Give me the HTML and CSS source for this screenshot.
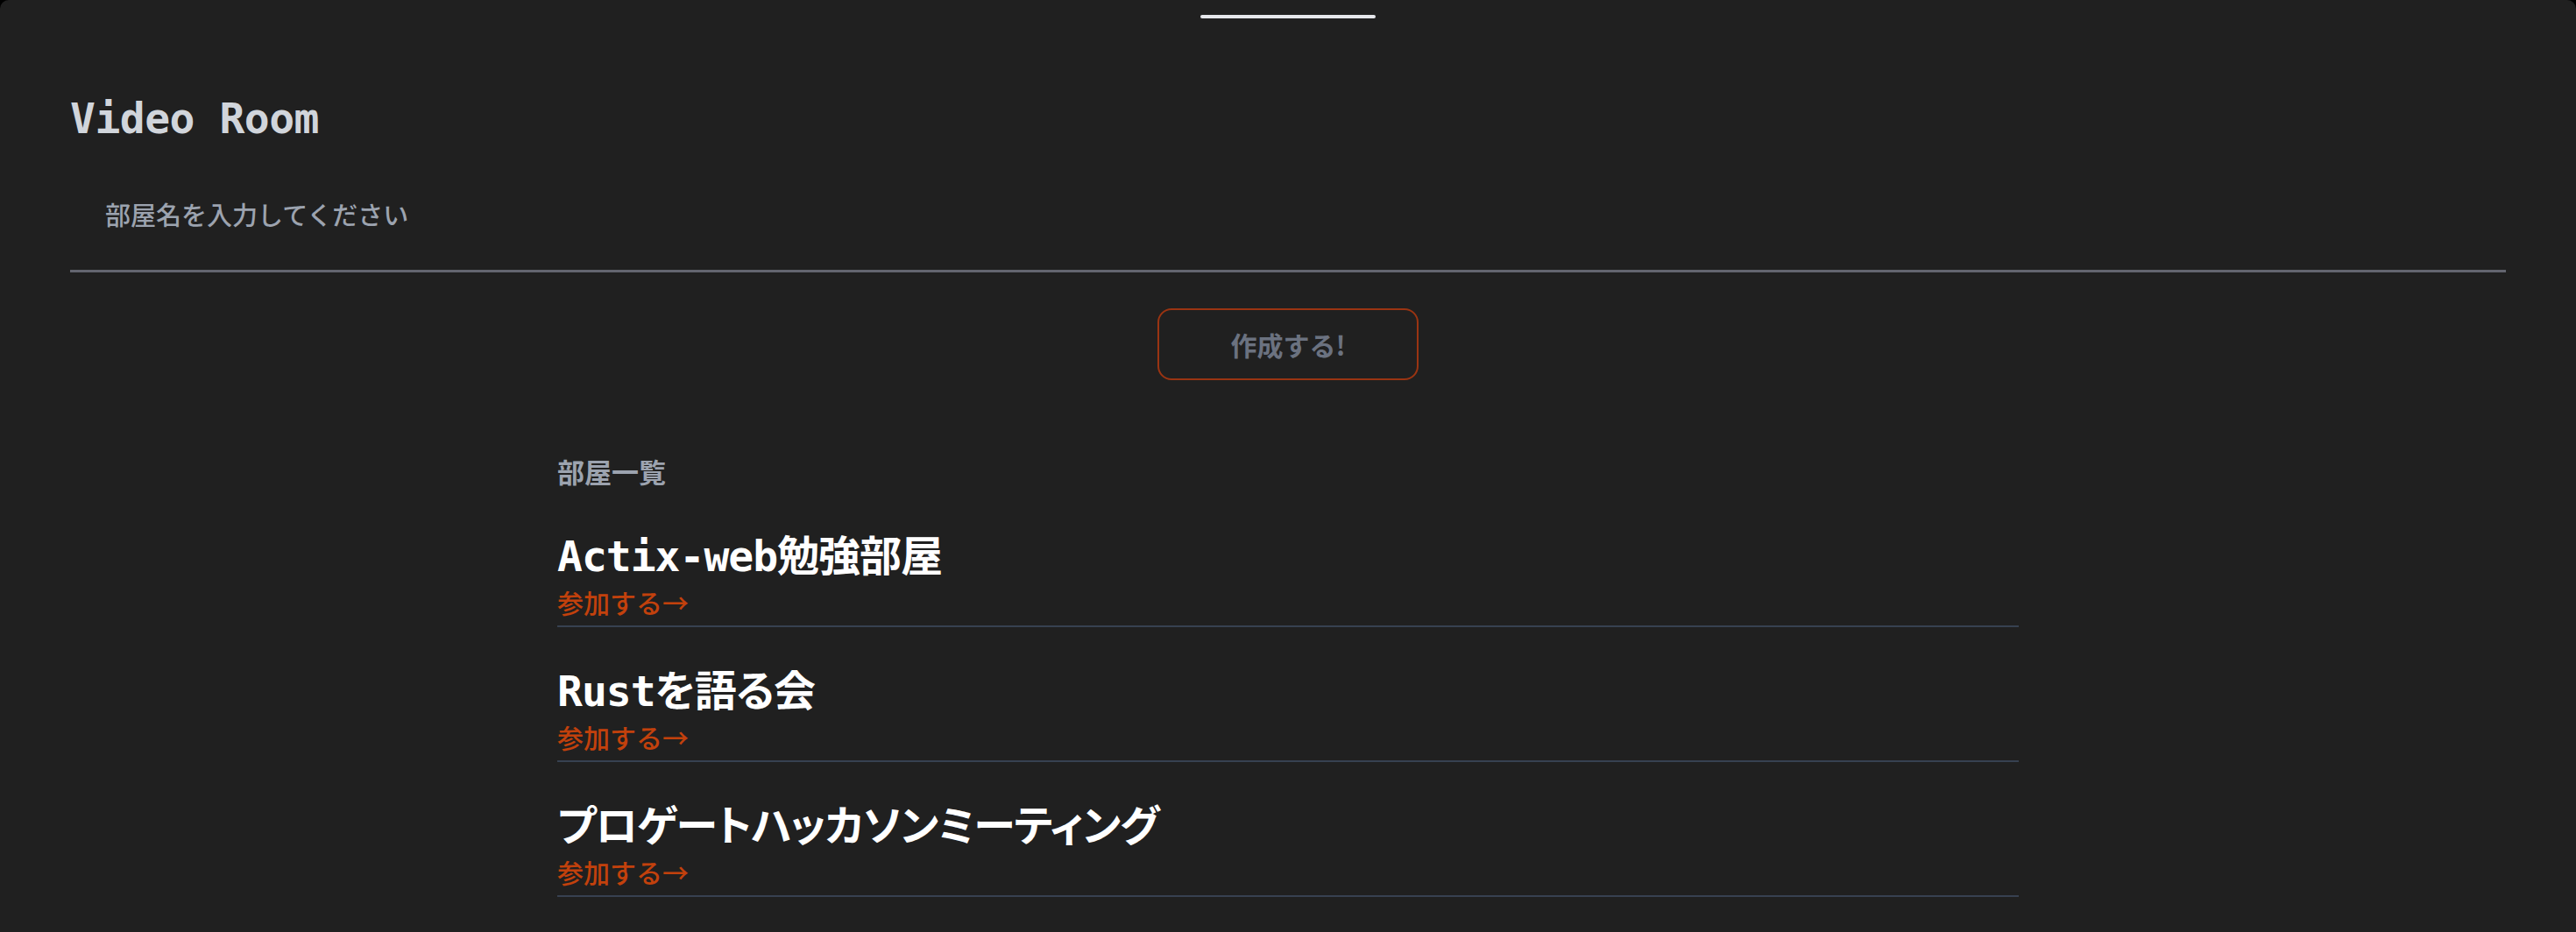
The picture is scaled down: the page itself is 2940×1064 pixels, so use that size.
FILE: index.html
```html
<!DOCTYPE html>
<html lang="ja">

<head>
    <meta charset="UTF-8">
    <meta name="viewport" content="width=device-width, initial-scale=1.0">
    <title>Video Room</title>
    <link rel="stylesheet" href="styles.css">
</head>

<body>
    <div class="app">
        <div class="handle"></div>
        <main class="container">
            <h1 class="title">Video Room</h1>
            <form class="create-form">
                <input class="room-input" type="text" placeholder="部屋名を入力してください">
                <button class="create-button" type="button">作成する!</button>
            </form>
            <section class="room-list">
                <h2 class="room-list-heading">部屋一覧</h2>
                <div class="room">
                    <div class="room-name">Actix-web勉強部屋</div>
                    <a class="room-link" href="#">参加する→</a>
                </div>
                <div class="room">
                    <div class="room-name">Rustを語る会</div>
                    <a class="room-link" href="#">参加する→</a>
                </div>
                <div class="room">
                    <div class="room-name">プロゲートハッカソンミーティング</div>
                    <a class="room-link" href="#">参加する→</a>
                </div>
            </section>
        </main>
    </div>
</body>

</html>
```

FILE: styles.css
```css
* {
    margin: 0;
    padding: 0;
    box-sizing: border-box;
}

body {
    background-color: #000;
    font-family: "Noto Sans CJK JP", sans-serif;
    overflow: hidden;
}

.app {
    background-color: #202020;
    border-radius: 10px 10px 0 0;
    min-height: 100vh;
    padding-top: 17px;
}

.handle {
    width: 200px;
    height: 4px;
    margin: 0 auto;
    border-radius: 2px;
    background: #e5e7eb;
}

.container {
    padding: 0 80px;
}

.title {
    margin-top: 82px;
    font-family: "DejaVu Sans Mono", "Noto Sans CJK JP", monospace;
    font-size: 48px;
    line-height: 64px;
    font-weight: bold;
    letter-spacing: -0.5px;
    color: #d1d5db;
}

.create-form {
    display: flex;
    flex-direction: column;
    align-items: center;
    margin-top: 12px;
}

.room-input {
    width: 100%;
    height: 132px;
    padding: 0 40px;
    background: transparent;
    border: none;
    border-bottom: 3px solid #63656f;
    outline: none;
    font-family: "Noto Sans CJK JP", sans-serif;
    font-size: 29px;
    font-weight: 500;
    color: #d1d5db;
}

.room-input::placeholder {
    color: #9ca3af;
}

.create-button {
    margin-top: 41px;
    width: 298px;
    height: 82px;
    background: transparent;
    border: 2px solid #9a3412;
    border-radius: 16px;
    font-family: "Noto Sans CJK JP", sans-serif;
    font-size: 30px;
    font-weight: bold;
    color: #6b7280;
    cursor: pointer;
}

.room-list {
    width: 60%;
    margin: 82px auto 0;
}

.room-list-heading {
    font-size: 31px;
    line-height: 44px;
    font-weight: bold;
    color: #9ca3af;
    margin-bottom: 2px;
}

.room {
    padding-top: 49px;
    border-bottom: 2px solid #374151;
}

.room-name {
    font-family: "DejaVu Sans Mono", "Noto Sans CJK JP", monospace;
    font-size: 48px;
    line-height: 49px;
    font-weight: bold;
    letter-spacing: -1px;
    color: #fff;
    font-feature-settings: "palt";
}

.room-link {
    display: block;
    font-size: 30px;
    line-height: 54px;
    font-weight: 500;
    color: #c2410c;
    text-decoration: none;
}
```
